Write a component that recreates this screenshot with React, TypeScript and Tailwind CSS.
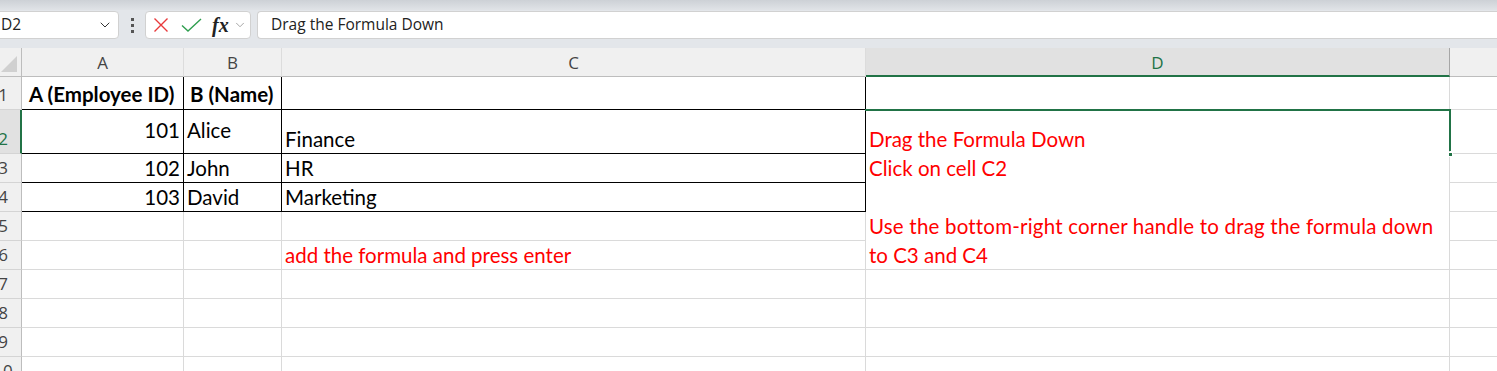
import React from 'react';
import { ChevronDown } from 'lucide-react';

const cellFont = { fontFamily: 'Lato, "Noto Sans", sans-serif' };

function RowHead({ n, selected }: { n: number; selected?: boolean }) {
  return (
    <div
      className={
        selected
          ? 'relative flex items-end overflow-hidden border-b border-[#d4d4d4] bg-[#e1e1e1] border-r-2 border-r-[#217346]'
          : 'relative flex items-end overflow-hidden border-b border-[#d4d4d4] border-r border-r-[#bdbdbd] bg-[#f0f0f0]'
      }
    >
      <div
        className={
          selected
            ? 'ml-[-17px] flex w-[40px] shrink-0 justify-center pb-[3px] text-[17px] leading-[22px] text-[#217346]'
            : 'ml-[-17px] flex w-[40px] shrink-0 justify-center pb-[3px] text-[17px] leading-[22px] text-[#444]'
        }
        style={{ fontFamily: '"Open Sans", sans-serif' }}
      >
        {n}
      </div>
    </div>
  );
}

function ColHead({ label, selected, last }: { label?: string; selected?: boolean; last?: boolean }) {
  if (selected) {
    return (
      <div
        className="flex items-end justify-center border-b-2 border-b-[#217346] border-r border-r-[#a6a6a6] bg-[#e1e1e1] pb-[1px] text-[17px] leading-[22px] text-[#217346]"
        style={{ fontFamily: '"Open Sans", sans-serif' }}
      >
        {label}
      </div>
    );
  }
  return (
    <div
      className={
        last
          ? 'flex items-end justify-center border-b border-b-[#bdbdbd] bg-[#f0f0f0] pb-[2px] text-[17px] leading-[22px] text-[#444]'
          : 'flex items-end justify-center border-b border-b-[#bdbdbd] border-r border-r-[#dcdcdc] bg-[#f0f0f0] pb-[2px] text-[17px] leading-[22px] text-[#444]'
      }
      style={{ fontFamily: '"Open Sans", sans-serif' }}
    >
      {label}
    </div>
  );
}

export default function App() {
  return (
    <div className="h-[371px] w-[1497px] overflow-hidden bg-white" style={cellFont}>
      {/* title strip */}
      <div className="h-[10px] bg-gradient-to-b from-[#cdd1d6] to-[#e0e3e7]" />

      {/* formula bar */}
      <div className="flex h-[38px] items-start bg-[#e3e6ea] pt-[1px]">
        <div className="ml-[-6px] flex h-[28px] w-[125px] items-center justify-between rounded-[4px] border border-[#d1d1d1] bg-white pl-[6px] pr-[5px]">
          <span className="text-[15.5px] text-[#222]" style={{ fontFamily: '"Open Sans", sans-serif' }}>
            D2
          </span>
          <ChevronDown className="h-[16px] w-[16px] text-[#333]" strokeWidth={1.5} />
        </div>
        <div className="flex h-[28px] w-[26px] flex-col items-center justify-center gap-[3px]">
          <span className="h-[3px] w-[3px] bg-[#555]" />
          <span className="h-[3px] w-[3px] bg-[#555]" />
          <span className="h-[3px] w-[3px] bg-[#555]" />
        </div>
        <div className="flex h-[28px] w-[106px] items-center rounded-[4px] border border-[#d1d1d1] bg-white pl-[6px]">
          <svg width="16" height="16" viewBox="0 0 16 16" className="ml-[1px]">
            <path d="M1.5 1.5 L14.5 14.5 M14.5 1.5 L1.5 14.5" stroke="#e8393b" strokeWidth="1.4" fill="none" />
          </svg>
          <svg width="21" height="16" viewBox="0 0 21 16" className="ml-[12px]">
            <path d="M1 8.5 L7 14 L20 2" stroke="#2f9e4f" strokeWidth="1.4" fill="none" />
          </svg>
          <span
            className="ml-[10px] text-[20px] font-bold italic leading-none text-[#222]"
            style={{ fontFamily: '"Liberation Serif", serif' }}
          >
            fx
          </span>
          <ChevronDown className="ml-[4px] h-[14px] w-[14px] text-[#999]" strokeWidth={1.5} />
        </div>
        <div className="ml-[6px] flex h-[28px] flex-1 items-center rounded-l-[4px] border border-r-0 border-[#d1d1d1] bg-white pl-[13px]">
          <span className="text-[15.5px] text-[#222]" style={{ fontFamily: '"Open Sans", sans-serif' }}>
            Drag the Formula Down
          </span>
        </div>
      </div>

      {/* sheet */}
      <div className="relative grid grid-cols-[22px_162px_98px_584px_584px_1fr] grid-rows-[29px_33px_44px_repeat(8,29px)] text-[20.5px] text-black">
        {/* header row */}
        <div className="relative border-b border-r border-[#bdbdbd] bg-[#f0f0f0]">
          <div className="absolute bottom-[4px] right-[4px] h-0 w-0 border-b-[16px] border-l-[16px] border-b-[#d0d0d0] border-l-transparent" />
        </div>
        <ColHead label="A" />
        <ColHead label="B" />
        <ColHead label="C" />
        <ColHead label="D" selected />
        <ColHead last />

        {/* row 1 */}
        <RowHead n={1} />
        <div className="flex items-end whitespace-nowrap border-b border-r border-black pb-[2px] pl-[7px] font-bold leading-[26px]">A (Employee ID)</div>
        <div className="flex items-end whitespace-nowrap border-b border-r border-black pb-[2px] pl-[6px] font-bold leading-[26px]">B (Name)</div>
        <div className="border-b border-r border-black" />
        <div className="border-r border-[#dadada]" />
        <div className="border-b border-[#dadada]" />

        {/* row 2 */}
        <RowHead n={2} selected />
        <div className="flex items-start justify-end border-b border-r border-black pr-[3px] pt-[7px] leading-[26px]">101</div>
        <div className="flex items-start border-b border-r border-black pl-[3px] pt-[7px] leading-[26px]">Alice</div>
        <div className="flex items-end border-b border-r border-black pl-[3px] pb-[1px] leading-[26px]">Finance</div>
        <div className="row-span-5 flex flex-col justify-end whitespace-nowrap border-b border-r border-[#dadada] pl-[3px] text-[#ff0000]">
          <div className="h-[29px] pt-[2px] leading-[26px]">Drag the Formula Down</div>
          <div className="h-[29px] pt-[2px] leading-[26px]">Click on cell C2</div>
          <div className="h-[29px]" />
          <div className="h-[29px] pt-[2px] leading-[26px] tracking-[0.2px]">Use the bottom-right corner handle to drag the formula down</div>
          <div className="h-[29px] pt-[2px] leading-[26px]">to C3 and C4</div>
        </div>
        <div className="border-b border-[#dadada]" />

        {/* row 3 */}
        <RowHead n={3} />
        <div className="flex items-end justify-end border-b border-r border-black pr-[3px] pb-[1px] leading-[26px]">102</div>
        <div className="flex items-end border-b border-r border-black pl-[3px] pb-[1px] leading-[26px]">John</div>
        <div className="flex items-end border-b border-r border-black pl-[3px] pb-[1px] leading-[26px]">HR</div>
        <div className="border-b border-[#dadada]" />

        {/* row 4 */}
        <RowHead n={4} />
        <div className="flex items-end justify-end border-b border-r border-black pr-[3px] pb-[1px] leading-[26px]">103</div>
        <div className="flex items-end border-b border-r border-black pl-[3px] pb-[1px] leading-[26px]">David</div>
        <div className="flex items-end border-b border-r border-black pl-[3px] pb-[1px] leading-[26px]">Marketing</div>
        <div className="border-b border-[#dadada]" />

        {/* row 5 */}
        <RowHead n={5} />
        <div className="border-b border-r border-[#dadada]" />
        <div className="border-b border-r border-[#dadada]" />
        <div className="border-b border-r border-[#dadada]" />
        <div className="border-b border-[#dadada]" />

        {/* row 6 */}
        <RowHead n={6} />
        <div className="border-b border-r border-[#dadada]" />
        <div className="border-b border-r border-[#dadada]" />
        <div className="flex items-end whitespace-nowrap border-b border-r border-[#dadada] pl-[3px] pb-[1px] leading-[26px] text-[#ff0000]">add the formula and press enter</div>
        <div className="border-b border-[#dadada]" />

        {[7, 8, 9, 10].map((n) => (
          <React.Fragment key={n}>
            <RowHead n={n} />
            <div className="border-b border-r border-[#dadada]" />
            <div className="border-b border-r border-[#dadada]" />
            <div className="border-b border-r border-[#dadada]" />
            <div className="border-b border-r border-[#dadada]" />
            <div className="border-b border-[#dadada]" />
          </React.Fragment>
        ))}

        {/* active cell D2 */}
        <div className="pointer-events-none absolute left-[865px] top-[61px] h-[2px] w-[586px] bg-[#217346]" />
        <div className="pointer-events-none absolute left-[1449px] top-[61px] h-[42px] w-[2px] bg-[#217346]" />
        <div className="pointer-events-none absolute left-[1448px] top-[104px] h-[5px] w-[5px] border border-white bg-[#217346]" />
      </div>
    </div>
  );
}
